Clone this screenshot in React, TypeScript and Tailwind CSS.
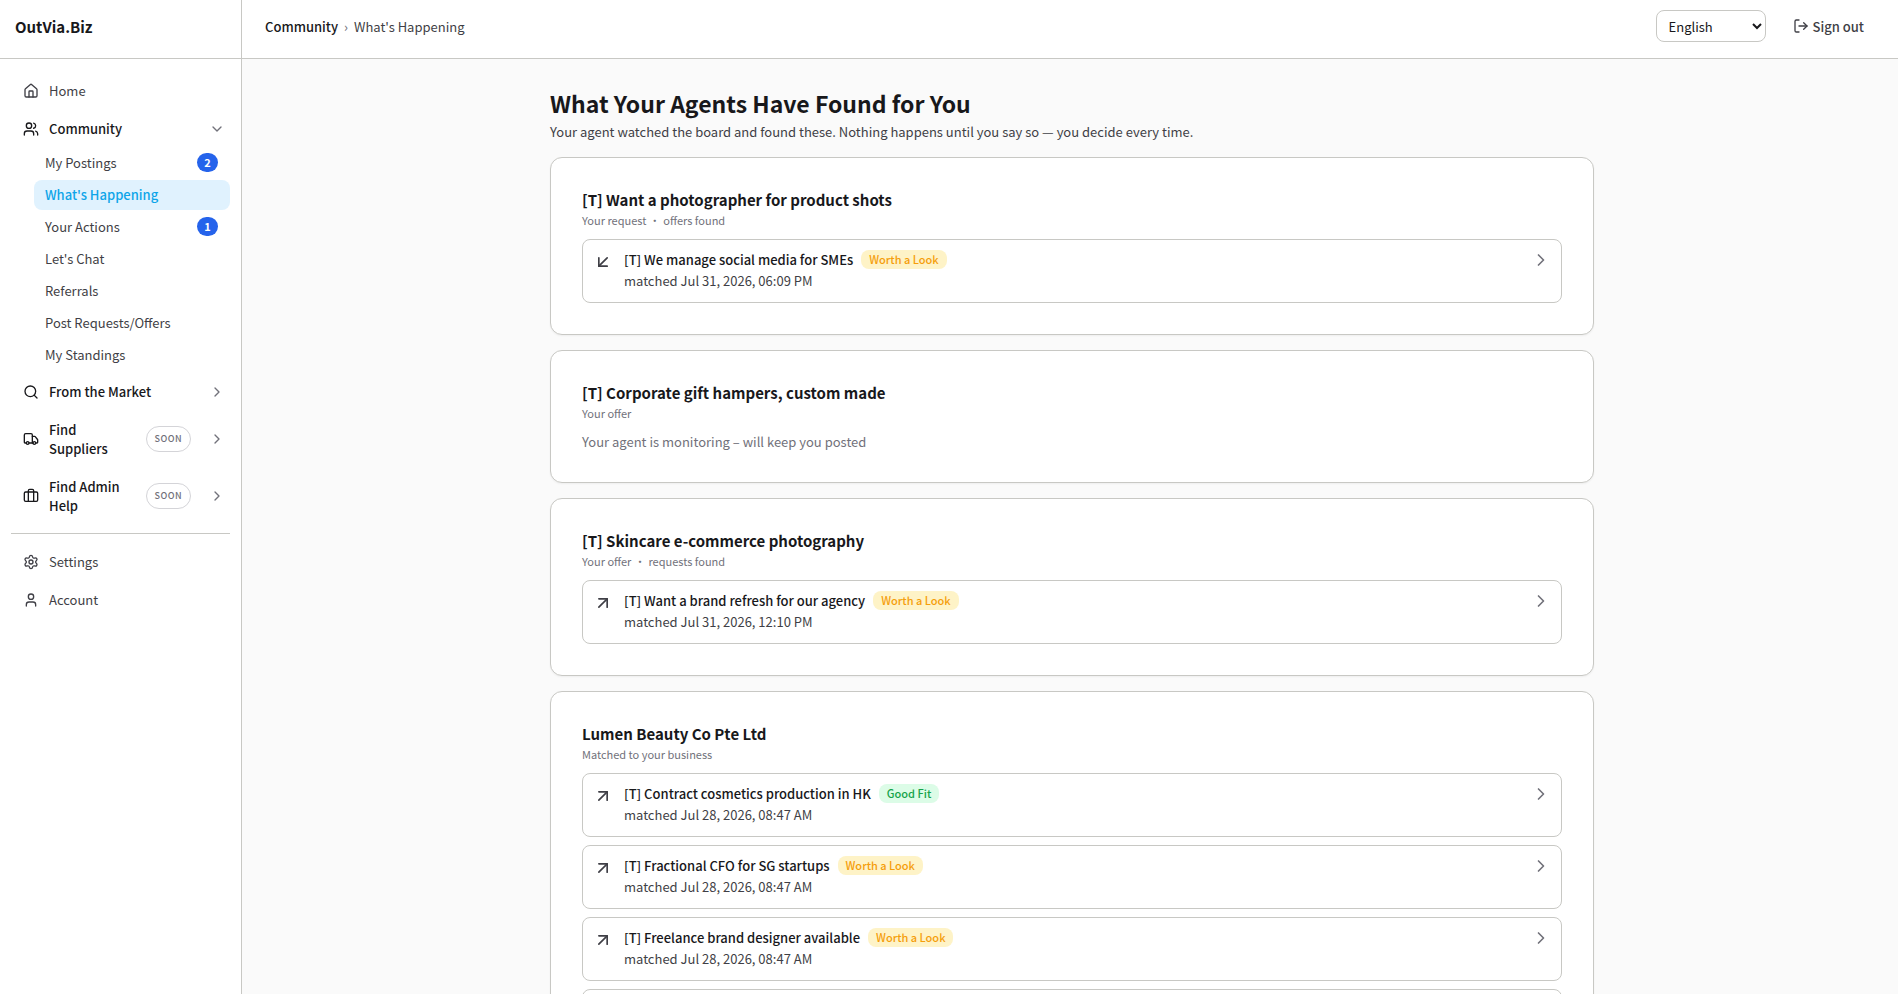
import { useState } from "react"
import {
    ArrowDownLeft,
    ArrowUpRight,
    ChevronDown,
    ChevronRight,
    House,
    LogOut,
    Search,
    Settings,
    Truck,
    User,
    Users
} from "lucide-react"

interface Match {
    title: string
    matched: string
    rating: "worth" | "good"
}

interface Group {
    title: string
    kind: string
    found?: string
    direction: "in" | "out"
    matches: Match[]
}

const GROUPS: Group[] = [
    {
        title: "[T] Want a photographer for product shots",
        kind: "Your request",
        found: "offers found",
        direction: "in",
        matches: [{ title: "[T] We manage social media for SMEs", matched: "Jul 31, 2026, 06:09 PM", rating: "worth" }]
    },
    {
        title: "[T] Corporate gift hampers, custom made",
        kind: "Your offer",
        direction: "out",
        matches: []
    },
    {
        title: "[T] Skincare e-commerce photography",
        kind: "Your offer",
        found: "requests found",
        direction: "out",
        matches: [{ title: "[T] Want a brand refresh for our agency", matched: "Jul 31, 2026, 12:10 PM", rating: "worth" }]
    },
    {
        title: "Lumen Beauty Co Pte Ltd",
        kind: "Matched to your business",
        direction: "out",
        matches: [
            { title: "[T] Contract cosmetics production in HK", matched: "Jul 28, 2026, 08:47 AM", rating: "good" },
            { title: "[T] Fractional CFO for SG startups", matched: "Jul 28, 2026, 08:47 AM", rating: "worth" },
            { title: "[T] Freelance brand designer available", matched: "Jul 28, 2026, 08:47 AM", rating: "worth" },
            { title: "[T] Retail packaging design", matched: "Jul 28, 2026, 08:47 AM", rating: "worth" }
        ]
    }
]

const COMMUNITY_LINKS = [
    { label: "My Postings", count: 2 },
    { label: "What's Happening" },
    { label: "Your Actions", count: 1 },
    { label: "Let's Chat" },
    { label: "Referrals" },
    { label: "Post Requests/Offers" },
    { label: "My Standings" }
]

function SuitcaseIcon() {
    return (
        <svg className="w-4 h-4 shrink-0" viewBox="0 0 24 24" fill="none" stroke="currentColor" strokeWidth="2" strokeLinecap="round" strokeLinejoin="round">
            <path d="M16 20V4a2 2 0 0 0-2-2h-4a2 2 0 0 0-2 2v16" />
            <rect width="20" height="14" x="2" y="6" rx="2" />
        </svg>
    )
}

function NavLink({ icon, label }: { icon: React.ReactNode; label: string }) {
    return (
        <a href="#" className="flex items-center gap-[10px] px-3 py-[9px] rounded-md text-[#3f3f46]">
            {icon}
            <span>{label}</span>
        </a>
    )
}

interface NavSectionProps {
    icon: React.ReactNode
    label: string
    open?: boolean
    soon?: boolean
    onToggle?: () => void
}

function NavSection({ icon, label, open = false, soon = false, onToggle }: NavSectionProps) {
    return (
        <div className="flex items-center pr-[5px] text-[#18181b]">
            <a href="#" className="flex flex-1 items-center gap-[10px] py-[9px] pl-3 font-medium">
                {icon}
                <span className="flex-1">{label}</span>
                {soon && (
                    <span className="rounded-full border border-[#d4d4d8] px-2 py-1 text-[9px] leading-4 tracking-wider text-[#71717a]">
                        SOON
                    </span>
                )}
            </a>
            <button type="button" aria-label={`Toggle ${label}`} onClick={onToggle} className="ml-[18px] text-[#71717a]">
                {open ? <ChevronDown className="w-4 h-4" /> : <ChevronRight className="w-4 h-4" />}
            </button>
        </div>
    )
}

function RatingBadge({ rating }: { rating: Match["rating"] }) {
    if (rating === "good") {
        return <span className="rounded-lg bg-[#dcfce7] px-2 text-[11px] leading-[19px] font-medium text-[#16a34a]">Good Fit</span>
    }
    return <span className="rounded-lg bg-[#fef3c7] px-2 text-[11px] leading-[19px] font-medium text-[#f59e0b]">Worth a Look</span>
}

function MatchRow({ match, direction }: { match: Match; direction: Group["direction"] }) {
    const Arrow = direction === "in" ? ArrowDownLeft : ArrowUpRight
    return (
        <a href="#" className="flex items-start gap-[11px] rounded-lg border border-[#c8c8c4] bg-white px-[10px] pt-[9px] pb-[11px]">
            <Arrow className="mt-[3px] w-5 h-5 shrink-0 text-[#3f3f46]" />
            <div className="flex-1 min-w-0">
                <div className="flex items-center gap-2">
                    <span className="font-medium text-[#18181b]">{match.title}</span>
                    <RatingBadge rating={match.rating} />
                </div>
                <p className="text-[#3f3f46]">matched {match.matched}</p>
            </div>
            <ChevronRight className="mt-px w-5 h-5 shrink-0 text-[#71717a]" />
        </a>
    )
}

function GroupCard({ group }: { group: Group }) {
    return (
        <section className="rounded-xl border border-[#c8c8c4] bg-white px-[31px] pt-[30px] pb-[31px] shadow-xs">
            <h2 className="text-[15px] leading-6 font-semibold text-[#18181b]">{group.title}</h2>
            <p className="flex gap-[3px] text-[11px] leading-4 text-[#71717a]">
                <span>{group.kind}</span>
                {group.found && <span>•</span>}
                {group.found && <span>{group.found}</span>}
            </p>
            {group.matches.length > 0 ? (
                <div className="mt-[11px] flex flex-col gap-2 leading-[21px]">
                    {group.matches.map((match) => (
                        <MatchRow key={match.title} match={match} direction={group.direction} />
                    ))}
                </div>
            ) : (
                <p className="mt-[11px] text-[#71717a]">Your agent is monitoring – will keep you posted</p>
            )}
        </section>
    )
}

export default function App() {
    const [communityOpen, setCommunityOpen] = useState(true)
    const [language, setLanguage] = useState("English")

    return (
        <div className="flex min-h-screen bg-[#fafafa] font-['Noto_Sans_CJK_SC','Noto_Sans',sans-serif] text-[13px] leading-[19px] text-[#18181b]">
            {/* Sidebar */}
            <aside className="flex w-[242px] shrink-0 flex-col border-r border-[#c8c8c4] bg-white">
                <div className="flex h-[59px] shrink-0 items-center border-b border-[#c8c8c4] px-[15px] pb-[5px]">
                    <a href="#" className="text-[15px] leading-6 font-semibold">OutVia.Biz</a>
                </div>
                <nav className="flex flex-col gap-px px-[11px] py-[13px]">
                    <NavLink icon={<House className="w-4 h-4" />} label="Home" />
                    <NavSection
                        icon={<Users className="w-4 h-4 shrink-0" />}
                        label="Community"
                        open={communityOpen}
                        onToggle={() => setCommunityOpen(!communityOpen)}
                    />
                    {communityOpen && (
                        <ul className="mb-[2px] ml-[23px] flex flex-col gap-[2px]">
                            {COMMUNITY_LINKS.map((link) => (
                                <li key={link.label}>
                                    <a
                                        href="#"
                                        className={`flex h-[30px] items-center justify-between rounded-lg pr-3 pb-px pl-[11px] ${
                                            link.label === "What's Happening"
                                            ? 'bg-[#e0f2fe] font-medium text-[#0ea5e9]'
                                            : 'text-[#3f3f46]'
                                        }`}
                                    >
                                        <span>{link.label}</span>
                                        {link.count && (
                                            <span className="min-w-[21px] rounded-full bg-[#2563eb] text-center text-[11px] font-bold text-white">
                                                {link.count}
                                            </span>
                                        )}
                                    </a>
                                </li>
                            ))}
                        </ul>
                    )}
                    <NavSection icon={<Search className="w-4 h-4 shrink-0" />} label="From the Market" />
                    <NavSection icon={<Truck className="w-4 h-4 shrink-0" />} label="Find Suppliers" soon />
                    <NavSection icon={<SuitcaseIcon />} label="Find Admin Help" soon />
                    <hr className="my-2 border-[#c8c8c4]" />
                    <NavLink icon={<Settings className="w-4 h-4" />} label="Settings" />
                    <NavLink icon={<User className="w-4 h-4" />} label="Account" />
                </nav>
            </aside>

            <div className="flex min-w-0 flex-1 flex-col">
                {/* Top bar */}
                <header className="flex h-[59px] shrink-0 items-center justify-between border-b border-[#c8c8c4] bg-white px-[23px] pb-[6px]">
                    <nav className="flex items-center gap-[6px]">
                        <a href="#" className="font-medium">Community</a>
                        <span className="text-[#71717a]">›</span>
                        <span className="text-[#3f3f46]">What's Happening</span>
                    </nav>
                    <div className="flex items-center gap-4">
                        <select
                            aria-label="Language"
                            value={language}
                            onChange={(e) => setLanguage(e.target.value)}
                            className="h-8 w-[110px] rounded-lg border border-[#c8c8c4] bg-white px-2"
                        >
                            <option>English</option>
                            <option>中文</option>
                        </select>
                        <button type="button" className="flex items-center gap-1 px-[11px] font-medium text-[#3f3f46]">
                            <LogOut className="w-4 h-4" />
                            Sign out
                        </button>
                    </div>
                </header>

                {/* Findings */}
                <main className="flex-1 pt-[29px] pr-6 pb-8 pl-7">
                    <div className="mx-auto max-w-[1044px]">
                        <h1 className="text-[23px] leading-[31px] font-semibold">What Your Agents Have Found for You</h1>
                        <p className="mt-[3px] mb-4 text-[#3f3f46]">
                            Your agent watched the board and found these. Nothing happens until you say so — you decide every time.
                        </p>
                        <div className="flex flex-col gap-[15px]">
                            {GROUPS.map((group) => (
                                <GroupCard key={group.title} group={group} />
                            ))}
                        </div>
                    </div>
                </main>
            </div>
        </div>
    )
}
